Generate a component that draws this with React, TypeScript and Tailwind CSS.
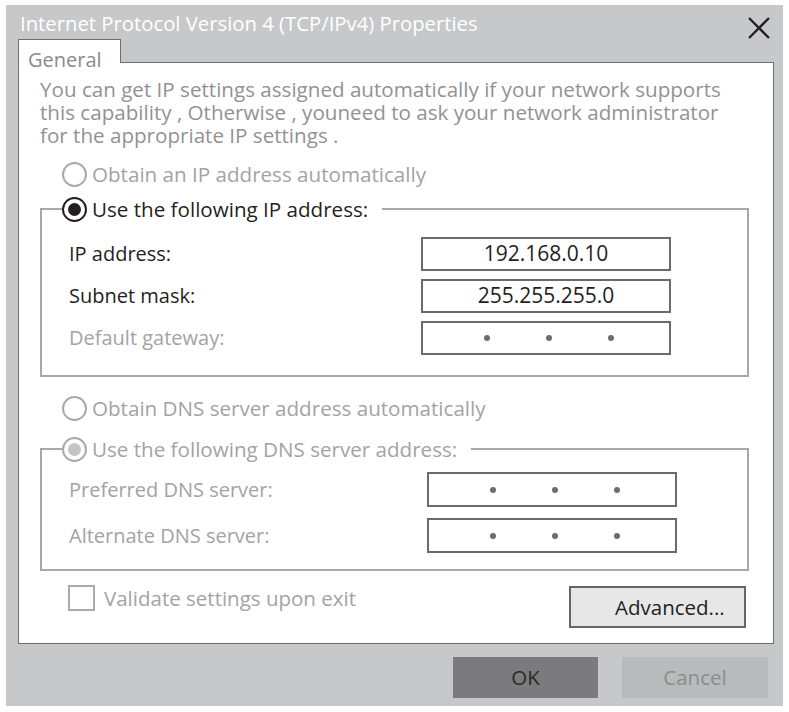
import type { ReactNode } from "react";

function Radio({ checked, disabled }: { checked?: boolean; disabled?: boolean }) {
  const ring = disabled ? "border-[#a9a9a9]" : checked ? "border-[#231f20]" : "border-[#a9a9a9]";
  return (
    <span
      className={`flex h-[25px] w-[25px] shrink-0 items-center justify-center rounded-full border-2 bg-white ${ring}`}
    >
      {checked && (
        <span
          className={`h-[13px] w-[13px] rounded-full ${disabled ? "bg-[#c4c4c4]" : "bg-[#231f20]"}`}
        />
      )}
    </span>
  );
}

function RadioRow({
  label,
  checked,
  disabled,
  dark,
}: {
  label: string;
  checked?: boolean;
  disabled?: boolean;
  dark?: boolean;
}) {
  return (
    <div className="flex h-[26px] items-center gap-[5px]">
      <Radio checked={checked} disabled={disabled} />
      <span className={`text-[20.6px] leading-[26px] ${dark ? "text-[#231f20]" : "text-[#a3a3a3]"}`}>
        {label}
      </span>
    </div>
  );
}

function Dots() {
  return (
    <div className="flex h-full w-full items-center justify-center gap-[56px] pl-[6px]">
      <span className="h-[6px] w-[6px] rounded-full bg-[#6d6d6d]" />
      <span className="h-[6px] w-[6px] rounded-full bg-[#6d6d6d]" />
      <span className="h-[6px] w-[6px] rounded-full bg-[#6d6d6d]" />
    </div>
  );
}

function Field({ children, h }: { children: ReactNode; h: string }) {
  return (
    <div
      className={`flex w-[250px] items-center justify-center border-2 border-[#6a6a6a] bg-white text-[21px] text-[#231f20] ${h}`}
    >
      {children}
    </div>
  );
}

function GroupBox({ legend, children }: { legend: ReactNode; children: ReactNode }) {
  return (
    <fieldset className="w-[709px] border-2 border-[#a8a8a8]">
      <legend className="ml-[20px] pr-[14px]">{legend}</legend>
      {children}
    </fieldset>
  );
}

export default function App() {
  return (
    <div className="min-h-screen bg-white pl-[6px] pt-[5px] [font-family:'Open_Sans','Liberation_Sans',sans-serif]">
      <div className="flex h-[701px] w-[777px] flex-col bg-[#c7c8ca]">
        {/* title bar */}
        <div className="flex h-[34px] items-center justify-between pl-[14px] pr-[12px]">
          <span className="pt-[1px] text-[20.3px] leading-[26px] text-white">
            Internet Protocol Version 4 (TCP/IPv4) Properties
          </span>
          <svg width="24" height="22" viewBox="0 0 24 22" className="mt-[12px]">
            <path d="M2 1 L22 21 M22 1 L2 21" stroke="#231f20" strokeWidth="2.4" fill="none" />
          </svg>
        </div>

        {/* tab */}
        <div className="relative z-10 -mb-px ml-[12px] h-[24px] w-[103px] border-l border-r border-t border-[#6e6e6e] bg-white">
          <span className="block pl-[9px] pt-[9px] text-[20px] leading-[22px] text-[#8a8a8a]">General</span>
        </div>

        {/* panel */}
        <div className="ml-[12px] flex h-[582px] w-[756px] flex-col border border-[#6e6e6e] bg-white pl-[21px] pt-[15px]">
          <p className="text-[20.6px] leading-[23px] text-[#929292]">
            You can get IP settings assigned automatically if your network supports
            <br />
            this capability , Otherwise , youneed to ask your network administrator
            <br />
            for the appropriate IP settings .
          </p>

          <div className="ml-[22px] mt-[14px]">
            <RadioRow label="Obtain an IP address automatically" />
          </div>

          <div className="mt-[9px]">
            <GroupBox legend={<RadioRow label="Use the following IP address:" checked dark />}>
              <div className="grid grid-cols-[352px_250px] gap-y-[8px] pb-[20px] pl-[27px] pt-[15px]">
                <span className="flex h-[34px] items-center text-[20px] text-[#231f20]">IP address:</span>
                <Field h="h-[34px]">192.168.0.10</Field>
                <span className="flex h-[34px] items-center text-[20px] text-[#231f20]">Subnet mask:</span>
                <Field h="h-[34px]">255.255.255.0</Field>
                <span className="flex h-[34px] items-center text-[20px] text-[#a3a3a3]">Default gateway:</span>
                <Field h="h-[34px]">
                  <Dots />
                </Field>
              </div>
            </GroupBox>
          </div>

          <div className="ml-[22px] mt-[18px]">
            <RadioRow label="Obtain DNS server address automatically" />
          </div>

          <div className="mt-[15px]">
            <GroupBox legend={<RadioRow label="Use the following DNS server address:" checked disabled />}>
              <div className="grid grid-cols-[358px_250px] gap-y-[11px] pb-[16px] pl-[27px] pt-[10px]">
                <span className="flex h-[35px] items-center text-[20px] text-[#a3a3a3]">Preferred DNS server:</span>
                <Field h="h-[35px]">
                  <Dots />
                </Field>
                <span className="flex h-[35px] items-center text-[20px] text-[#a3a3a3]">Alternate DNS server:</span>
                <Field h="h-[35px]">
                  <Dots />
                </Field>
              </div>
            </GroupBox>
          </div>

          <div className="mt-[14px] flex w-[709px] items-start">
            <div className="ml-[28px] flex items-center gap-[9px]">
              <span className="h-[26px] w-[27px] border-2 border-[#ababab] bg-white" />
              <span className="text-[20.5px] leading-[26px] text-[#a3a3a3]">Validate settings upon exit</span>
            </div>
            <button className="ml-auto mr-[3px] mt-[1px] h-[42px] w-[177px] border-2 border-[#666666] bg-[#e7e7e7] pl-[44px] pr-[10px] text-left text-[20.5px] text-[#231f20]">
              Advanced...
            </button>
          </div>
        </div>

        {/* footer buttons */}
        <div className="flex justify-end gap-[24px] pr-[15px] pt-[13px]">
          <button className="h-[41px] w-[145px] bg-[#7b7b7d] text-[20.5px] text-[#2a2a2a]">OK</button>
          <button className="h-[41px] w-[146px] bg-[#b9babc] text-[20.5px] text-[#8c8c8c]">Cancel</button>
        </div>
      </div>
    </div>
  );
}
